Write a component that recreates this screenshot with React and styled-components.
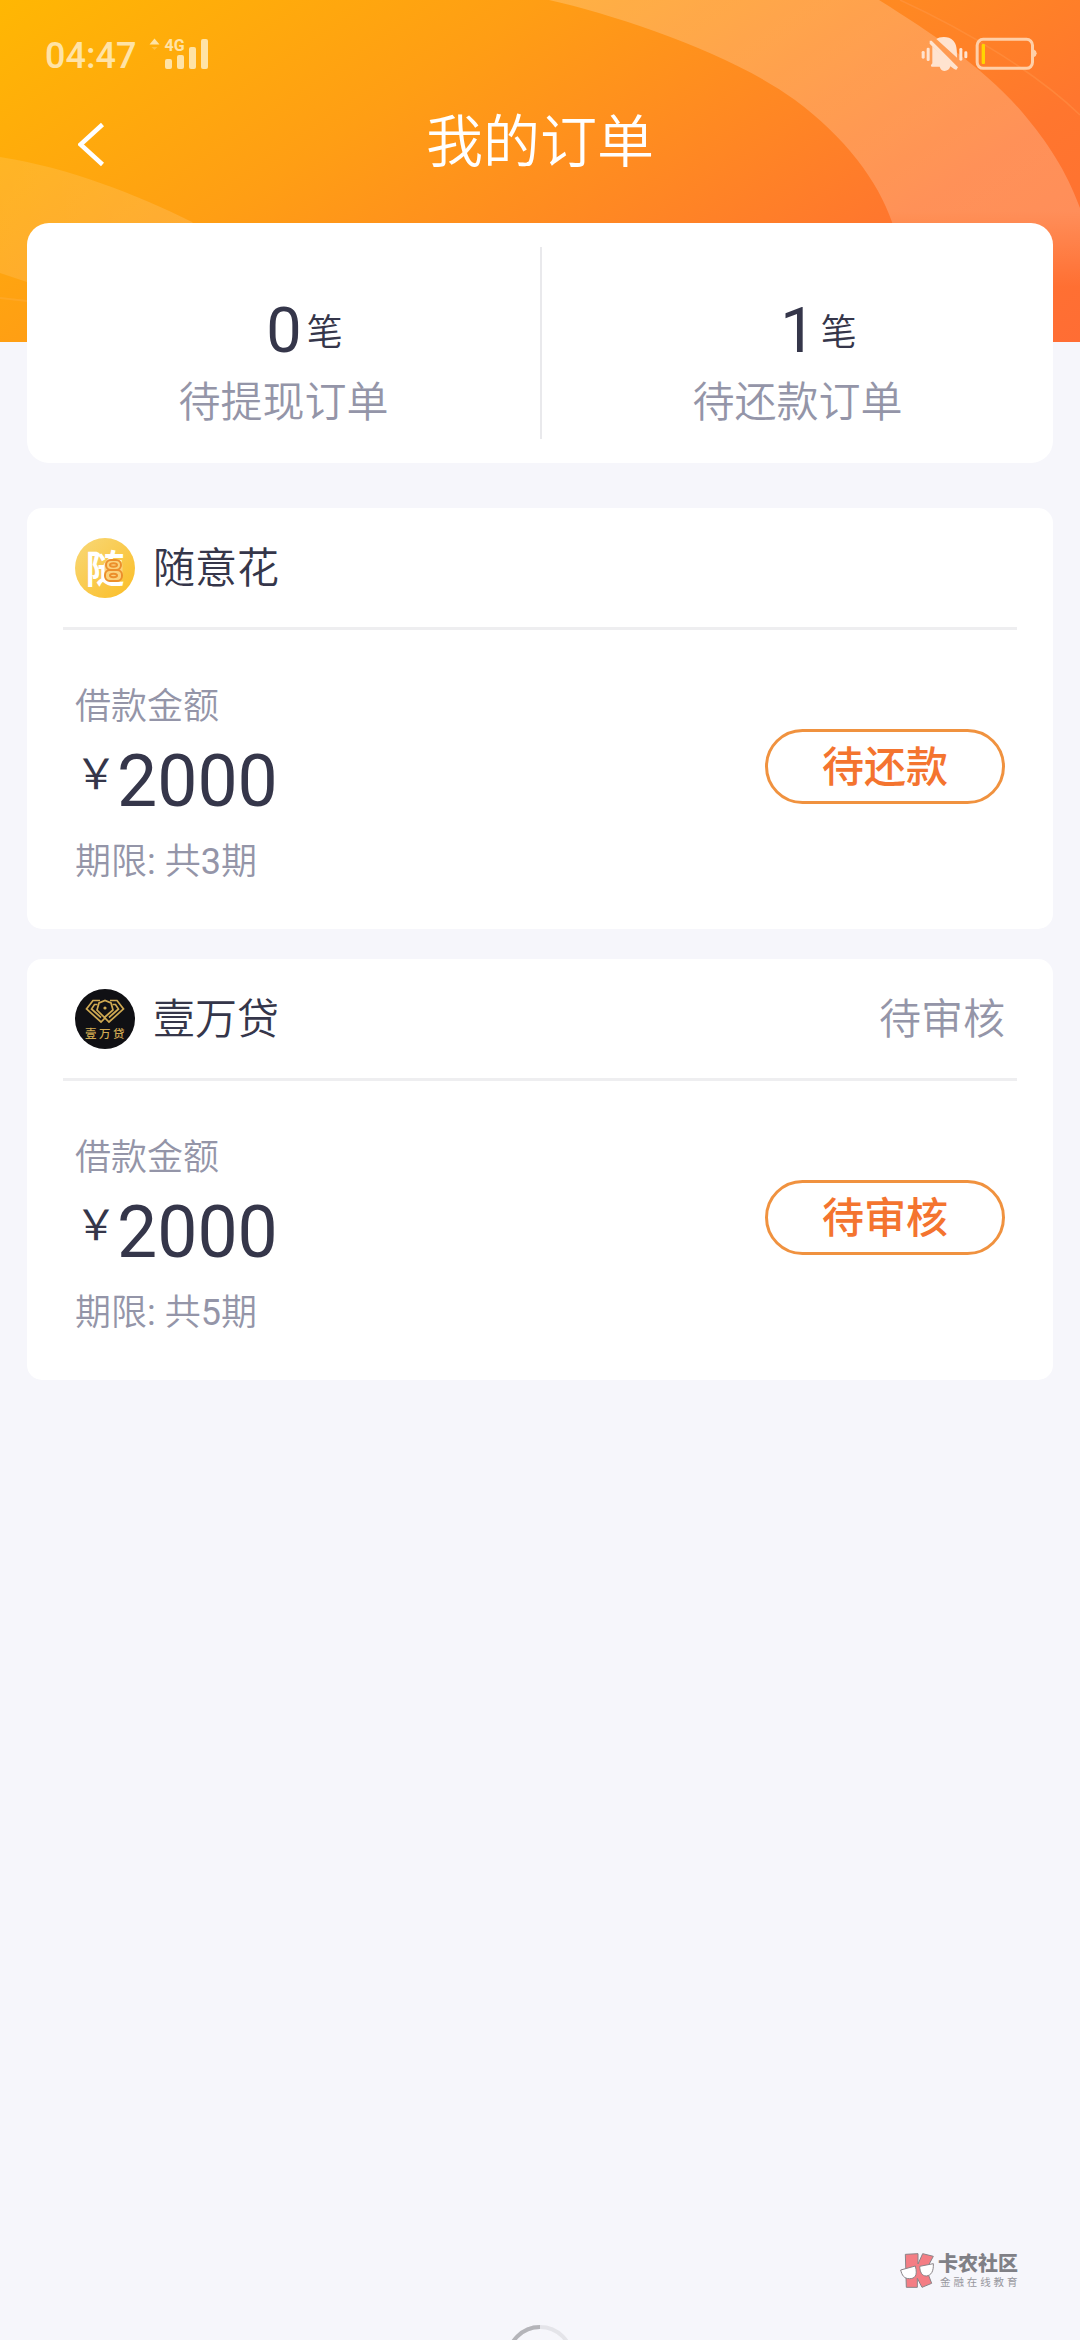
import React from 'react';
import styled, { createGlobalStyle } from 'styled-components';

const cjk = `Roboto, 'Noto Sans CJK SC', sans-serif`;
const cjkLight = `Roboto, 'Noto Sans CJK SC DemiLight', 'Noto Sans CJK SC', sans-serif`;

const GlobalStyle = createGlobalStyle`
  * { box-sizing: border-box; }
  body { margin: 0; background: #f6f6fb; }
`;

const Page = styled.div`
  position: relative;
  width: 1080px;
  height: 2340px;
  overflow: hidden;
  background: #f6f6fb;
  font-family: ${cjkLight};
  color: #35364a;
  display: flex;
  flex-direction: column;
`;

const Backdrop = styled.div`
  position: absolute;
  top: 0;
  left: 0;
  width: 1080px;
  height: 342px;
  background: linear-gradient(146deg, #ffb703 0%, #ff9e14 34%, #ff8624 60%, #ff762e 77%, #ff6d34 100%);
  svg { display: block; }
`;

const StatusBar = styled.header`
  position: relative;
  height: 72px;
  padding: 35px 43px 0 45px;
  display: flex;
  align-items: flex-start;
`;

const Clock = styled.span`
  font-size: 36px;
  line-height: 42px;
  font-weight: 500;
  color: #ffe3a6;
`;

const Signal = styled.svg`
  display: block;
  margin: 1px 0 0 13px;
`;

const StatusIcons = styled.div`
  margin-left: auto;
  display: flex;
  align-items: center;
  gap: 6px;
  height: 38px;
  svg { display: block; }
`;

const NavBar = styled.nav`
  position: relative;
  height: 151px;
  padding: 0 78px;
  display: grid;
  grid-template-columns: 27px 1fr 27px;
  align-items: start;
`;

const BackIcon = styled.svg`
  display: block;
  margin-top: 50px;
`;

const Title = styled.h1`
  margin: 31px 0 0;
  font-size: 57px;
  line-height: 80px;
  font-weight: 400;
  color: #fff;
  text-align: center;
`;

const Summary = styled.section`
  position: relative;
  margin: 0 27px;
  height: 240px;
  padding: 24px 0;
  border-radius: 22px;
  background: #fff;
  display: grid;
  grid-template-columns: 1fr 1fr;
`;

const SummaryItem = styled.div`
  padding-top: 50px;
  text-align: center;
  & + & { border-left: 2px solid #e9e9ec; }
`;

const Count = styled.div`
  display: flex;
  justify-content: center;
  align-items: center;
  padding-left: 42px;
  height: 68px;
  line-height: 68px;
`;

const CountValue = styled.span`
  font-size: 63px;
  margin-right: 5px;
`;

const CountUnit = styled.span`
  font-size: 36px;
  line-height: 60px;
  padding-top: 4px;
`;

const SummaryLabel = styled.div`
  margin-top: 8px;
  font-size: 42px;
  line-height: 60px;
  color: #9495a8;
`;

const Orders = styled.main`
  margin: 45px 27px 0;
  display: flex;
  flex-direction: column;
  gap: 30px;
`;

const Card = styled.article`
  height: 421px;
  padding: 0 36px;
  border-radius: 15px;
  background: #fff;
`;

const CardHead = styled.div`
  height: 122px;
  padding: 0 12px;
  display: flex;
  align-items: center;
  border-bottom: 3px solid #eeeef0;
`;

const Logo = styled.svg`
  display: block;
  flex: none;
`;

const Lender = styled.span`
  margin: 3px 0 0 18px;
  font-size: 42px;
  line-height: 60px;
`;

const Status = styled.span`
  margin: 3px 0 0 auto;
  font-size: 42px;
  line-height: 60px;
  color: #9495a8;
`;

const CardBody = styled.div`
  padding: 51px 12px 0;
  display: flex;
  justify-content: space-between;
`;

const Caption = styled.div`
  font-size: 36px;
  line-height: 52px;
  color: #9495a8;
`;

const Amount = styled.div`
  display: flex;
  align-items: flex-start;
  height: 103px;
`;

const Currency = styled.span`
  margin-top: 8px;
  font-family: 'Noto Sans CJK SC', sans-serif;
  font-size: 42px;
  line-height: 60px;
`;

const AmountValue = styled.span`
  margin-top: 7px;
  font-size: 71.500px;
  line-height: 84px;
`;

const Action = styled.button`
  width: 240px;
  height: 75px;
  margin-top: 48px;
  padding: 3px 0 0;
  border: 3px solid #f0923f;
  border-radius: 38px;
  background: #fff;
  font-family: ${cjk};
  font-size: 42px;
  line-height: 60px;
  font-weight: 500;
  color: #f4742f;
`;

const Spinner = styled.svg`
  position: absolute;
  left: 504px;
  top: 2323px;
`;

const Watermark = styled.div`
  position: absolute;
  left: 900px;
  top: 2250px;
  display: flex;
  svg { display: block; }
`;

const WatermarkText = styled.div`
  margin-left: 3px;
  font-family: 'Noto Sans CJK SC', sans-serif;
`;

const WatermarkName = styled.div`
  margin-top: 1px;
  font-size: 20px;
  line-height: 24px;
  font-weight: 900;
  color: #808086;
`;

const WatermarkSlogan = styled.div`
  margin: 0 0 0 2px;
  font-size: 10.500px;
  line-height: 14px;
  letter-spacing: 2.900px;
  white-space: nowrap;
  color: #98989e;
`;

const HeaderArt = () => (
  <svg width="1080" height="342" viewBox="0 0 1080 342">
    <defs>
      <linearGradient id="ringFade" x1="0" y1="0" x2="0" y2="1">
        <stop offset="0" stopColor="#fff" stopOpacity="0.2" />
        <stop offset="0.62" stopColor="#fff" stopOpacity="0.2" />
        <stop offset="0.84" stopColor="#fff" stopOpacity="0" />
      </linearGradient>
      <linearGradient id="bandFade" x1="0" y1="0" x2="1" y2="0">
        <stop offset="0" stopColor="#fff" stopOpacity="0.11" />
        <stop offset="1" stopColor="#fff" stopOpacity="0.15" />
      </linearGradient>
    </defs>
    <path
      d="M540 -2C610 13 728 51 795 100C845 137 878 181 892 222L920 342H1080V208C1066 170 1048 143 1022 112C985 69 935 35 879 0Z"
      fill="url(#ringFade)"
    />
    <path d="M0 157C70 168 135 194 192 222L300 342L27 282L0 273Z" fill="url(#bandFade)" />
    <path d="M900 0C970 32 1040 76 1080 115" fill="none" stroke="#ff9a50" strokeOpacity="0.4" strokeWidth="1.5" />
    <path d="M0 298L27 301" stroke="#ffb040" strokeOpacity="0.4" strokeWidth="2" />
  </svg>
);

const SignalIcon = () => (
  <Signal width="60" height="34" viewBox="0 0 60 34" fill="#ffe3a6">
    <path d="M0.5 8.5L5.5 2.5L10.5 8.5Z" />
    <path d="M2.5 11H8.5L5.5 14Z" opacity="0.35" />
    <text x="15.5" y="14.5" fontFamily="Roboto, sans-serif" fontSize="16" fontWeight="700">4G</text>
    <rect x="16" y="23" width="7" height="10" rx="2" />
    <rect x="28" y="19" width="7" height="14" rx="2" />
    <rect x="40" y="11" width="7" height="22" rx="2" />
    <rect x="52" y="3" width="7" height="30" rx="2" />
  </Signal>
);

const MutedBellIcon = () => (
  <svg width="48" height="38" viewBox="178 105 144 114">
    <g fill="#ffe3cf">
      <path d="M224 117C234 109 262 107 275 122C285 133 286 148 286 173Z" />
      <path d="M212 139L281 203C289 206 284 210 278 207L266 199C262 216 238 218 234 200H210C205 197 210 193 212 190Z" />
      <path d="M204 122L210 122L289 202L284 209L278 207L204 131Z" />
      <rect x="195" y="143" width="9" height="40" rx="4" />
      <rect x="180" y="153" width="9" height="23" rx="4" />
      <rect x="293" y="144" width="9" height="38" rx="4" />
      <rect x="308" y="154" width="9" height="21" rx="4" />
    </g>
  </svg>
);

const BatteryIcon = () => (
  <svg width="62" height="36" viewBox="343 108 186 108">
    <rect x="349.500" y="118" width="166" height="87" rx="18" fill="none" stroke="#ffcfa8" strokeWidth="9" />
    <path d="M519 148Q528 152 528 160Q528 168 519 172Z" fill="#ffcfa8" />
    <rect x="363" y="132" width="10" height="60" rx="3" fill="#ffd500" />
  </svg>
);

const SuiyihuaLogo = () => (
  <Logo width="60" height="60" viewBox="0 0 60 60">
    <defs>
      <linearGradient id="gold" x1="0" y1="0" x2="1" y2="1">
        <stop offset="0" stopColor="#f8d878" />
        <stop offset="1" stopColor="#fbbd25" />
      </linearGradient>
    </defs>
    <circle cx="30" cy="30" r="30" fill="url(#gold)" />
    <text x="10.500" y="44.500" fontFamily="'Noto Sans CJK SC', sans-serif" fontSize="39" fontWeight="700" fill="#fff">随</text>
    <rect x="29.500" y="21" width="18" height="22" rx="6" fill="#fbd27c" />
    <g fill="none" stroke="#ec8f2c" strokeWidth="2">
      <rect x="31" y="22" width="15" height="10" rx="5" />
      <rect x="30" y="32" width="17" height="11" rx="5" />
      <ellipse cx="38.500" cy="27" rx="3.500" ry="1.800" />
      <ellipse cx="38.500" cy="37.500" rx="3.500" ry="1.800" />
    </g>
  </Logo>
);

const YiwandaiLogo = () => (
  <Logo width="60" height="60" viewBox="0 0 60 60">
    <circle cx="30" cy="30" r="30" fill="#101014" />
    <g fill="none" stroke="#cfa952" strokeWidth="1.700">
      <path d="M25 11.500H18L11.500 20L26 33L30 29" />
      <path d="M35 11.500H42L48.500 20L34 33L22 21L24 14L30 11.500L36 14L38 21L30 28" />
      <path d="M22.500 15.500H19.500L16.500 20L26 28.500" />
      <path d="M37.500 15.500H40.500L43.500 20L34 28.500" />
    </g>
    <circle cx="30" cy="19" r="1.600" fill="#cfa952" />
    <text x="10" y="48.500" fontFamily="'Noto Sans CJK SC', sans-serif" fontSize="11.500" fontWeight="500" letterSpacing="2.500" fill="#cfa952">壹万贷</text>
  </Logo>
);

const WatermarkLogo = () => (
  <svg width="35" height="40" viewBox="60 90 105 120">
    <path
      d="M76 103L114 101L114 132L128 101L160 109L139 148L155 190L126 202L112 175V202H79Z"
      fill="#f47d84"
      stroke="#8a8488"
      strokeWidth="3"
    />
    <g fill="#fff" stroke="#8a8488" strokeWidth="3">
      <path d="M62 150L106 138C114 168 104 176 88 176C72 176 66 166 62 150Z" />
      <path d="M119 139L160 131C161 154 154 166 139 168C125 168 120 156 119 139Z" />
    </g>
  </svg>
);

const orders = [
  { lender: '随意花', logo: <SuiyihuaLogo />, amount: '2000', term: '期限: 共3期', action: '待还款' },
  { lender: '壹万贷', logo: <YiwandaiLogo />, status: '待审核', amount: '2000', term: '期限: 共5期', action: '待审核' },
];

const summary = [
  { value: '0', label: '待提现订单' },
  { value: '1', label: '待还款订单' },
];

export default function App() {
  return (
    <Page>
      <GlobalStyle />
      <Backdrop><HeaderArt /></Backdrop>
      <StatusBar>
        <Clock>04:47</Clock>
        <SignalIcon />
        <StatusIcons>
          <MutedBellIcon />
          <BatteryIcon />
        </StatusIcons>
      </StatusBar>
      <NavBar>
        <BackIcon width="27" height="45" viewBox="0 0 27 45">
          <path d="M24.500 2.500L2.500 22.500L24.500 42.500" fill="none" stroke="#fff" strokeWidth="4.500" />
        </BackIcon>
        <Title>我的订单</Title>
      </NavBar>
      <Summary>
        {summary.map((s) => (
          <SummaryItem key={s.label}>
            <Count>
              <CountValue>{s.value}</CountValue>
              <CountUnit>笔</CountUnit>
            </Count>
            <SummaryLabel>{s.label}</SummaryLabel>
          </SummaryItem>
        ))}
      </Summary>
      <Orders>
        {orders.map((o) => (
          <Card key={o.lender}>
            <CardHead>
              {o.logo}
              <Lender>{o.lender}</Lender>
              {o.status && <Status>{o.status}</Status>}
            </CardHead>
            <CardBody>
              <div>
                <Caption>借款金额</Caption>
                <Amount>
                  <Currency>{'\uFFE5'}</Currency>
                  <AmountValue>{o.amount}</AmountValue>
                </Amount>
                <Caption>{o.term}</Caption>
              </div>
              <Action>{o.action}</Action>
            </CardBody>
          </Card>
        ))}
      </Orders>
      <Watermark>
        <WatermarkLogo />
        <WatermarkText>
          <WatermarkName>卡农社区</WatermarkName>
          <WatermarkSlogan>金融在线教育</WatermarkSlogan>
        </WatermarkText>
      </Watermark>
      <Spinner width="72" height="72" viewBox="0 0 72 72" fill="none" strokeWidth="4">
        <circle cx="36" cy="36" r="32" stroke="#e4e4e9" />
        <path d="M4 36A32 32 0 0 1 36 4" stroke="#b4b4b9" />
      </Spinner>
    </Page>
  );
}
